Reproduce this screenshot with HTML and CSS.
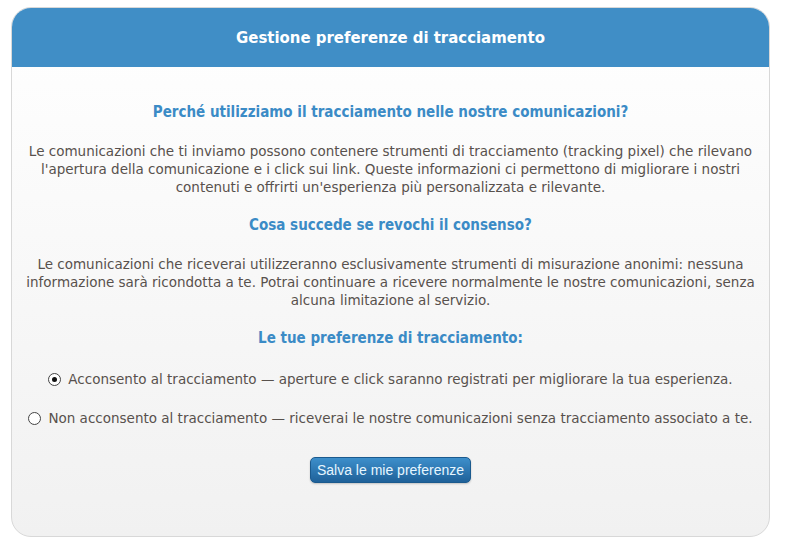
FILE: index.html
```html
<!DOCTYPE html>
<html lang="it">
<head>
<meta charset="utf-8">
<title>Gestione preferenze di tracciamento</title>
<link rel="stylesheet" href="styles.css">
</head>
<body>
<div class="card">
  <div class="card-header">Gestione preferenze di tracciamento</div>
  <div class="card-body">
    <h2 class="section-title first">Perché utilizziamo il tracciamento nelle nostre comunicazioni?</h2>
    <p class="text">Le comunicazioni che ti inviamo possono contenere strumenti di tracciamento (tracking pixel) che rilevano l'apertura della comunicazione e i click sui link. Queste informazioni ci permettono di migliorare i nostri contenuti e offrirti un'esperienza più personalizzata e rilevante.</p>
    <h2 class="section-title">Cosa succede se revochi il consenso?</h2>
    <p class="text">Le comunicazioni che riceverai utilizzeranno esclusivamente strumenti di misurazione anonimi: nessuna informazione sarà ricondotta a te. Potrai continuare a ricevere normalmente le nostre comunicazioni, senza alcuna limitazione al servizio.</p>
    <h2 class="section-title">Le tue preferenze di tracciamento:</h2>
    <form class="prefs">
      <label class="option"><input type="radio" class="radio" name="track" checked>Acconsento al tracciamento — aperture e click saranno registrati per migliorare la tua esperienza.</label>
      <label class="option"><input type="radio" class="radio" name="track">Non acconsento al tracciamento — riceverai le nostre comunicazioni senza tracciamento associato a te.</label>
      <div class="actions"><button type="button" class="btn">Salva le mie preferenze</button></div>
    </form>
  </div>
</div>
</body>
</html>
```
FILE: styles.css
```css
html, body { margin: 0; padding: 0; background: #fff; }
body { padding: 7px 15px 0 11px; font-family: "DejaVu Sans", sans-serif; }
.card {
  width: 757px;
  height: 528px;
  border: 1px solid #d8d8d8;
  border-radius: 20px;
  overflow: hidden;
  background: linear-gradient(#ffffff, #f1f1f1);
}
.card-header {
  background: #408ec6;
  color: #fff;
  font-family: "DejaVu Sans Condensed", "DejaVu Sans", sans-serif;
  font-weight: bold;
  font-size: 16.6px;
  text-align: center;
  height: 59px;
  line-height: 59px;
}
.card-body { padding: 35px 10px 0; text-align: center; color: #58514d; }
.section-title {
  color: #3b8bc6;
  font-family: "DejaVu Sans Condensed", "DejaVu Sans", sans-serif;
  font-size: 15px;
  font-weight: bold;
  margin: 19px 0 0;
  line-height: 20px;
}
.section-title.first { margin-top: 0; }
.text { font-size: 13.5px; line-height: 18px; margin: 20px 0 0; }
.prefs { margin-top: 22px; }
.option { display: block; font-size: 13.5px; line-height: 18px; margin-bottom: 21px; }
.radio {
  appearance: none;
  -webkit-appearance: none;
  width: 13px;
  height: 13px;
  margin: 0 7px 0 0;
  border: 1.5px solid #444;
  border-radius: 50%;
  background: #fff;
  vertical-align: -2px;
  position: relative;
}
.radio:checked::after {
  content: "";
  position: absolute;
  left: 2.5px;
  top: 2.5px;
  width: 5px;
  height: 5px;
  border-radius: 50%;
  background: #111;
}
.actions { padding-top: 9px; }
.btn {
  font-family: "Liberation Sans", Arial, sans-serif;
  font-size: 14px;
  color: #e6f6ff;
  background: linear-gradient(#3d8fcb, #1f6199);
  border: 1px solid #1b5a8e;
  border-radius: 5px;
  padding: 0 6px;
  height: 26px;
  box-shadow: 0 1px 2px rgba(0,0,0,0.2);
}
```
